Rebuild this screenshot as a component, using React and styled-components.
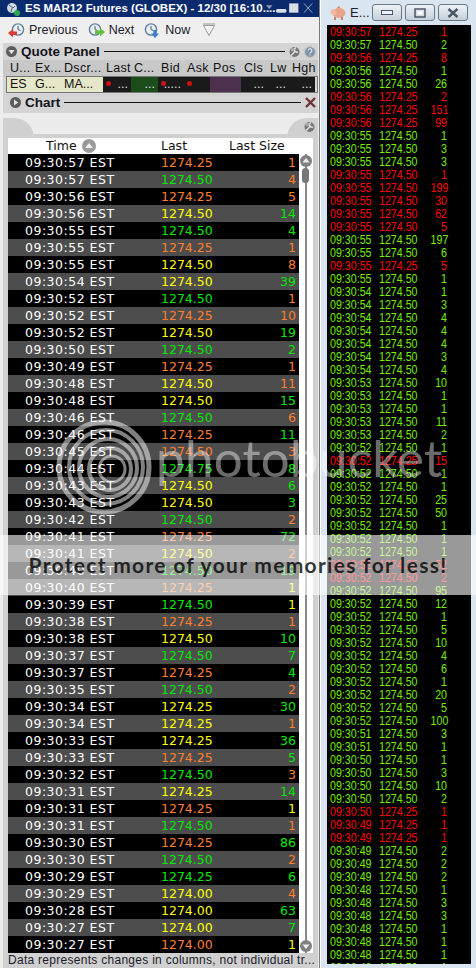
import React from "react";
import styled, { createGlobalStyle } from "styled-components";

const Global = createGlobalStyle`
  html, body { margin: 0; padding: 0; background: #d9e6f2; }
`;

const TAPE = [
  ["57","25","1","o","o"],["57","50","4","g","o"],["56","25","5","o","o"],["56","50","14","y","g"],
  ["55","50","4","g","g"],["55","25","1","o","o"],["55","50","8","y","o"],["54","50","39","y","g"],
  ["52","50","1","g","o"],["52","25","10","o","o"],["52","50","19","y","g"],["50","50","2","g","g"],
  ["49","25","1","o","o"],["48","50","11","y","o"],["48","50","15","y","g"],["46","50","6","g","o"],
  ["46","25","11","o","g"],["45","50","3","o","o"],["44","75","8","g","g"],["43","50","6","y","g"],
  ["43","50","3","y","g"],["42","50","2","g","o"],["41","25","72","o","g"],["41","50","2","y","o"],
  ["40","50","19","g","g"],["40","25","1","o","y"],["39","50","1","g","y"],["38","25","1","o","o"],
  ["38","50","10","y","g"],["37","50","7","g","g"],["37","25","4","o","g"],["35","50","2","g","o"],
  ["34","25","30","y","g"],["34","25","1","y","o"],["33","25","36","y","g"],["33","25","5","o","g"],
  ["32","50","3","g","o"],["31","25","14","y","g"],["31","25","1","o","y"],["31","50","1","g","o"],
  ["30","25","86","o","g"],["30","50","2","g","o"],["29","25","6","g","g"],
];
const TAPE_END = [
  ["29","4","y","o"],["28","63","y","g"],["27","7","y","g"],["27","1","o","y"],
];

const TICKS = [
  ["57","25","1","r"],["57","50","2","g"],["56","25","8","r"],["56","50","1","g"],["56","50","26","g"],
  ["56","25","2","r"],["56","25","151","r"],["56","25","99","r"],["55","50","1","g"],["55","50","3","g"],
  ["55","50","3","g"],["55","50","1","r"],["55","50","199","r"],["55","50","30","r"],["55","50","62","r"],
  ["55","50","5","r"],["55","50","197","g"],["55","50","6","g"],["55","25","5","r"],["55","50","1","g"],
  ["54","50","1","g"],["54","50","3","g"],["54","50","4","g"],["54","50","4","g"],["54","50","4","g"],
  ["54","50","3","g"],["54","50","4","g"],["53","50","10","g"],["53","50","1","g"],["53","50","1","g"],
  ["53","50","11","g"],["53","50","2","g"],["52","50","1","g"],["52","25","15","r"],["52","50","1","g"],
  ["52","50","1","g"],["52","50","25","g"],["52","50","50","g"],["52","50","1","g"],["52","50","1","g"],
  ["52","50","1","g"],["52","25","52","r"],["52","50","2","r"],["52","50","95","g"],["52","50","12","g"],
  ["52","50","1","g"],["52","50","5","g"],["52","50","10","g"],["52","50","4","g"],["52","50","6","g"],
  ["52","50","1","g"],["52","50","20","g"],["52","50","5","g"],["52","50","100","g"],["51","50","3","g"],
  ["51","50","1","g"],["50","50","1","g"],["50","50","3","g"],["50","50","10","g"],["50","50","2","g"],
  ["50","25","1","r"],["49","25","1","r"],["49","25","1","r"],["49","50","2","g"],["49","50","2","g"],
  ["49","50","2","g"],["48","50","1","g"],["48","50","3","g"],["48","50","3","g"],["48","50","1","g"],
  ["48","50","1","g"],["48","50","1","g"],["48","50","1","g"],
];

const tone = { o: "#ff7f2a", g: "#00e800", y: "#ffff00", r: "#ff0000", l: "#77ee00" };

const COLUMNS = "25px 29px 42px 28px 27px 26px 26px 31px 26px 22px 26px";
const QUOTE_HEADS = ["U...", "Ex...", "Dscr...", "Last", "C...", "Bid", "Ask", "Pos", "Cls", "Lw", "Hgh"];
const QUOTE_CELLS = [
  { t: "ES", k: "cream" }, { t: "G...", k: "cream" }, { t: "MA...", k: "cream" },
  { t: "...", k: "dark", dot: true }, { t: "...", k: "green" }, { t: ".....", k: "dark", dot: true },
  { t: "", k: "dark", dot: true }, { t: "", k: "purple" }, { t: "...", k: "dark" },
  { t: "...", k: "dark" }, { t: "...", k: "dark" },
];
const cellBg = { cream: "#e6e6c8", dark: "#1a1a1a", green: "#1b4d1b", purple: "#4d304d" };

const Page = styled.div`
  position: relative;
  width: 476px;
  height: 968px;
  overflow: hidden;
  display: flex;
  background: #d9e6f2;
`;
const MainWindow = styled.div`
  width: 319px;
  height: 968px;
  flex: none;
  display: flex;
  flex-direction: column;
  background: #ececec;
  border-right: 1px solid #7a7a7a;
  font-family: "DejaVu Sans", sans-serif;
`;
const TitleBar = styled.div`
  height: 17px;
  flex: none;
  display: flex;
  align-items: center;
  gap: 3px;
  padding: 0 3px 0 6px;
  background: #0a2a6e;
  color: #fff;
  font: bold 11.5px/17px "Liberation Sans", sans-serif;
`;
const TitleText = styled.span`
  flex: 1;
  min-width: 0;
  padding-left: 2px;
  white-space: nowrap;
`;
const Toolbar = styled.div`
  height: 26px;
  flex: none;
  display: flex;
  align-items: center;
  padding-left: 8px;
  background: #efefef;
  color: #1c1c2c;
  font: 12.5px "Liberation Sans", sans-serif;
`;
const ToolItem = styled.span`
  display: flex;
  align-items: center;
  gap: 4px;
  margin-right: ${(p) => p.$gap}px;
`;
const Panel = styled.div`
  margin: 0 1px 0 3px;
  background: #d4d4d4;
  flex: none;
`;
const PanelHead = styled.div`
  height: ${(p) => p.$h}px;
  display: flex;
  align-items: center;
  gap: 4px;
  padding: 0 2px 0 ${(p) => p.$pad}px;
  font: bold 13.5px "Liberation Sans", sans-serif;
  color: #141420;
`;
const Rule = styled.span`
  flex: 1;
  height: 1px;
  background: #111;
`;
const QuoteHeads = styled.div`
  display: grid;
  grid-template-columns: ${COLUMNS};
  height: 17px;
  padding-left: 4px;
  background: #c8c8c8;
  font: 12.5px/17px "Liberation Sans", sans-serif;
  color: #111;
  letter-spacing: 0.3px;
`;
const HeadCell = styled.span`
  padding-left: 3px;
  white-space: nowrap;
`;
const QuoteRow = styled.div`
  display: grid;
  grid-template-columns: ${COLUMNS};
  height: 15px;
  margin: 0 1px 0 4px;
  outline: 1px solid #777;
`;
const QuoteCell = styled.span`
  display: flex;
  align-items: center;
  justify-content: ${(p) => (p.$k === "cream" ? "flex-start" : "flex-end")};
  padding: 0 ${(p) => (p.$k === "cream" ? 0 : 3)}px 0 3px;
  background: ${(p) => cellBg[p.$k]};
  color: ${(p) => (p.$k === "cream" ? "#111" : "#ddd")};
  font: 12.5px/15px "Liberation Sans", sans-serif;
  position: relative;
`;
const Dot = styled.i`
  position: absolute;
  left: 3px;
  top: 4px;
  width: 5px;
  height: 5px;
  border-radius: 50%;
  background: #cc1111;
`;
const Gap = styled.div`
  height: 5px;
  flex: none;
  background: #ececec;
`;
const TablePanel = styled.div`
  margin: 0 1px 0 3px;
  flex: 1;
  min-height: 0;
  display: flex;
  flex-direction: column;
  background: #d0d0d0;
`;
const TabStrip = styled.div`
  height: 20px;
  flex: none;
  display: flex;
  background: #ececec;
`;
const TabEar = styled.div`
  width: 31px;
  flex: none;
  display: flex;
  justify-content: flex-end;
  padding: 3px 3px 0 0;
  box-sizing: border-box;
  background: #d0d0d0;
  border-radius: ${(p) => (p.$side === "l" ? "0 22px 0 0" : "22px 0 0 0")};
`;
const TabMiddle = styled.div`
  flex: 1;
  background: linear-gradient(#ececec 16px, #d0d0d0 16px);
`;
const TableWrap = styled.div`
  flex: 1;
  min-height: 0;
  margin: 0 5px;
  background: #fff;
  display: flex;
  flex-direction: column;
`;
const TableHead = styled.div`
  height: 16px;
  flex: none;
  display: grid;
  grid-template-columns: 153px 68px 1fr;
  font: 12.5px/16px "DejaVu Sans", sans-serif;
  color: #111;
`;
const HeadLabel = styled.span`
  display: flex;
  align-items: center;
  gap: 5px;
  padding-left: ${(p) => p.$pad}px;
`;
const TableBody = styled.div`
  flex: 1;
  min-height: 0;
  display: flex;
`;
const Rows = styled.div`
  width: 291px;
  flex: none;
`;
const Row = styled.div`
  height: 17px;
  display: grid;
  grid-template-columns: 153px 70px 1fr;
  background: ${(p) => (p.$alt ? "#4d4d4d" : "#000")};
  font: 12.5px/17px "DejaVu Sans", sans-serif;
  white-space: nowrap;
`;
const TimeCell = styled.span`
  padding-left: 17px;
  color: #fff;
  letter-spacing: 0.5px;
`;
const LastCell = styled.span`
  color: ${(p) => tone[p.$c]};
`;
const SizeCell = styled.span`
  text-align: right;
  padding-right: 3px;
  color: ${(p) => tone[p.$c]};
`;
const Scroll = styled.div`
  flex: 1;
  position: relative;
  background: linear-gradient(90deg, #fff 6px, #8a8a8a 6px, #8a8a8a 8px, #fff 8px);
`;
const ScrollBtn = styled.div`
  position: absolute;
  left: 1px;
  height: 12px;
  ${(p) => (p.$end ? "bottom: 1px;" : "top: 1px;")}
`;
const Thumb = styled.div`
  position: absolute;
  left: 3px;
  top: 14px;
  width: 7px;
  height: 15px;
  border-radius: 4px;
  background: #777;
`;
const Footer = styled.div`
  height: 15px;
  flex: none;
  padding-left: 5px;
  font: 12px/15px "Liberation Sans", sans-serif;
  color: #1a1a2a;
  letter-spacing: 0.28px;
  white-space: nowrap;
  overflow: hidden;
`;
const SideWindow = styled.div`
  flex: 1;
  display: flex;
  flex-direction: column;
  background: #d9e6f2;
  border-left: 1px solid #fff;
`;
const SideTitle = styled.div`
  height: 25px;
  flex: none;
  display: flex;
  align-items: center;
  padding-left: 9px;
  font: 13px "Liberation Sans", sans-serif;
  color: #222;
`;
const SideName = styled.span`
  margin-left: 4px;
  width: 22px;
`;
const WinButtons = styled.div`
  display: flex;
  gap: 3px;
`;
const WinButton = styled.span`
  width: 30px;
  height: 17px;
  box-sizing: border-box;
  display: flex;
  align-items: center;
  justify-content: center;
  border: 1px solid #6a7684;
  border-radius: 3px;
  background: linear-gradient(#eef2f6, #c6d0da);
`;
const Ticks = styled.div`
  height: 939px;
  margin: 0 5px 0 6px;
  background: #000;
  overflow: hidden;
  flex: none;
`;
const Tick = styled.div`
  height: 13px;
  display: grid;
  grid-template-columns: 49px 48px 20px;
  padding-left: 3px;
  color: ${(p) => tone[p.$c]};
  font: 13px/13px "Liberation Sans", sans-serif;
  white-space: nowrap;
`;
const TickText = styled.span`
  display: inline-block;
  transform: scaleX(0.82);
  transform-origin: ${(p) => (p.$end ? "right" : "left")} center;
  text-align: ${(p) => (p.$end ? "right" : "left")};
`;
const WatermarkBand = styled.div`
  position: absolute;
  left: 0;
  right: 0;
  top: 535px;
  height: 60px;
  background: rgba(255, 255, 255, 0.6);
  display: flex;
  align-items: flex-end;
  justify-content: center;
`;
const WatermarkCta = styled.span`
  margin-bottom: 18px;
  font: 700 21px/24px "Lato", sans-serif;
  letter-spacing: 1.3px;
  color: rgba(0, 0, 0, 0.78);
  white-space: nowrap;
`;
const WatermarkLogo = styled.svg`
  position: absolute;
  left: 55px;
  top: 419px;
`;
const WatermarkWord = styled.span`
  position: absolute;
  left: 156px;
  top: 430px;
  font: 400 51px/56px "Lato", sans-serif;
  letter-spacing: 0.3px;
  color: rgba(255, 255, 255, 0.42);
  white-space: nowrap;
`;

const Clock = ({ arrow, dir }) => (
  <svg width="17" height="17" viewBox="0 0 17 17">
    <circle cx={dir === "l" ? 10 : 7} cy="7.5" r="5.6" fill="#e8eef4" stroke="#5f7f9c" strokeWidth="1.4" />
    <path d={dir === "l" ? "M10 4v3.5l2.5 1" : "M7 4v3.5l2.5 1"} fill="none" stroke="#46586a" strokeWidth="1" />
    {dir === "l" && <path d="M0 11l5-4v2.5h4v3.5h-4v2.5z" fill={arrow} />}
    {dir === "r" && <path d="M17 10l-5-4v2.5H7v3.5h5v2.5z" fill={arrow} />}
    {dir === "d" && <path d="M11 16l-4-4.5h2.4V8h3.2v3.5H15z" fill={arrow} />}
  </svg>
);
const Toggle = ({ open }) => (
  <svg width="11" height="11" viewBox="0 0 11 11">
    <circle cx="5.5" cy="5.5" r="5.5" fill="#5c5c5c" />
    <path d={open ? "M2.5 4h6l-3 4.2z" : "M4 2.5v6l4.2-3z"} fill="#e4e4e4" />
  </svg>
);
const Wrench = () => (
  <svg width="11" height="12" viewBox="0 0 11 12">
    <circle cx="5.5" cy="6" r="5" fill="#777" />
    <path d="M2 9.5l4.5-4.5M7 1.5a3 3 0 0 0-1 4l3 1" fill="none" stroke="#e4e4e4" strokeWidth="1.4" />
    <circle cx="3.5" cy="3.5" r="2" fill="#aaa" />
  </svg>
);
const Help = () => (
  <svg width="12" height="12" viewBox="0 0 12 12">
    <circle cx="6" cy="6" r="5.4" fill="#7f93ab" stroke="#c4c4c4" strokeWidth="1" />
    <path d="M4.3 4.6a1.8 1.8 0 1 1 2.6 1.6c-.6.3-.9.6-.9 1.2M6 8.6v1" fill="none" stroke="#e8e8e8" strokeWidth="1.1" />
  </svg>
);
const ScrollCircle = ({ up }) => (
  <svg width="12" height="12" viewBox="0 0 12 12" style={{ display: "block" }}>
    <circle cx="6" cy="6" r="6" fill="#808080" />
    <path d={up ? "M2.4 7.6h7.2L6 3z" : "M2.4 4.4h7.2L6 9z"} fill="#ececec" />
  </svg>
);

const time = (s) => `09:30:${s}`;

export default function App() {
  const tapeRows = [
    ...TAPE.map(([s, f, q, lc, sc]) => ({ s, price: `1274.${f}`, q, lc, sc })),
    ...TAPE_END.map(([s, q, lc, sc]) => ({ s, price: "1274.00", q, lc, sc })),
  ];
  return (
    <Page>
      <Global />
      <MainWindow>
        <TitleBar>
          <svg width="14" height="14" viewBox="0 0 14 14">
            <circle cx="6" cy="6" r="5" fill="#cfd8e4" />
            <path d="M3 3l4 3 2-2M5 10l1-4" stroke="#47607f" strokeWidth="1" fill="none" />
            <circle cx="11" cy="11" r="3" fill="#2aa84a" />
          </svg>
          <TitleText>ES MAR12 Futures (GLOBEX) - 12/30 [16:10.....</TitleText>
          <svg width="50" height="13" viewBox="0 0 54 13">
            <path d="M0 3h7l-3.5 4z" fill="#8f9db8" />
            <rect x="11" y="7" width="11" height="4" rx="1.5" fill="#d8dde6" />
            <rect x="25" y="1" width="10" height="10" fill="#d8dde6" />
            <path d="M41 1l9 10M50 1l-9 10" stroke="#9fb0c8" strokeWidth="1" />
          </svg>
        </TitleBar>
        <Toolbar>
          <ToolItem $gap={10}><Clock dir="l" arrow="#d93a3a" />Previous</ToolItem>
          <ToolItem $gap={10}><Clock dir="r" arrow="#62c23c" />Next</ToolItem>
          <ToolItem $gap={12}><Clock dir="d" arrow="#3a7fd0" />Now</ToolItem>
          <svg width="14" height="14" viewBox="0 0 14 14">
            <path d="M1.5 2.5h11L7 12.5z" fill="#f4f4f4" stroke="#9a9a9a" strokeWidth="1" />
            <path d="M1 1h12" stroke="#9a9a9a" />
          </svg>
        </Toolbar>
        <Panel>
          <PanelHead $h={17} $pad={3}>
            <Toggle open />
            Quote Panel
            <Rule />
            <Wrench />
            <Help />
          </PanelHead>
          <QuoteHeads>
            {QUOTE_HEADS.map((h) => <HeadCell key={h}>{h}</HeadCell>)}
          </QuoteHeads>
          <QuoteRow>
            {QUOTE_CELLS.map((c, i) => (
              <QuoteCell key={i} $k={c.k}>
                {c.dot && <Dot />}
                {c.t}
              </QuoteCell>
            ))}
          </QuoteRow>
          <PanelHead $h={21} $pad={7}>
            <Toggle />
            Chart
            <Rule />
            <svg width="11" height="11" viewBox="0 0 11 11">
              <path d="M1 1l9 9M10 1l-9 9" stroke="#6e3434" strokeWidth="2.4" />
            </svg>
          </PanelHead>
        </Panel>
        <Gap />
        <TablePanel>
          <TabStrip>
            <TabEar $side="l" />
            <TabMiddle />
            <TabEar $side="r"><Wrench /></TabEar>
          </TabStrip>
          <TableWrap>
            <TableHead>
              <HeadLabel $pad={38}>
                Time
                <svg width="14" height="14" viewBox="0 0 14 14">
                  <circle cx="7" cy="7" r="7" fill="#9a9a9a" />
                  <path d="M3 9h8L7 4z" fill="#eee" />
                </svg>
              </HeadLabel>
              <HeadLabel $pad={0}>Last</HeadLabel>
              <HeadLabel $pad={0}>Last Size</HeadLabel>
            </TableHead>
            <TableBody>
              <Rows>
                {tapeRows.map((r, i) => (
                  <Row key={i} $alt={i % 2 === 1}>
                    <TimeCell>{time(r.s)} EST</TimeCell>
                    <LastCell $c={r.lc}>{r.price}</LastCell>
                    <SizeCell $c={r.sc}>{r.q}</SizeCell>
                  </Row>
                ))}
              </Rows>
              <Scroll>
                <ScrollBtn><ScrollCircle up /></ScrollBtn>
                <Thumb />
                <ScrollBtn $end><ScrollCircle /></ScrollBtn>
              </Scroll>
            </TableBody>
          </TableWrap>
          <Footer>Data represents changes in columns, not individual tr...</Footer>
        </TablePanel>
      </MainWindow>
      <SideWindow>
        <SideTitle>
          <svg width="16" height="14" viewBox="0 0 16 14">
            <ellipse cx="9" cy="7" rx="6.5" ry="5" fill="#e9a58c" />
            <circle cx="3.5" cy="6" r="3" fill="#f0b8a0" />
            <path d="M5 11v3M12 11v3" stroke="#c77f66" strokeWidth="2" />
            <path d="M7 2l2-2 1 2" fill="#c77f66" />
          </svg>
          <SideName>E...</SideName>
          <WinButtons>
            <WinButton>
              <svg width="12" height="6" viewBox="0 0 12 6">
                <rect x="0.5" y="0.5" width="11" height="4" fill="#eef" stroke="#4a5866" />
              </svg>
            </WinButton>
            <WinButton>
              <svg width="12" height="10" viewBox="0 0 12 10">
                <rect x="1" y="1" width="10" height="8" fill="none" stroke="#4a5866" strokeWidth="1.5" />
                <rect x="3.5" y="3.5" width="5" height="3" fill="#fff" />
              </svg>
            </WinButton>
            <WinButton>
              <svg width="12" height="10" viewBox="0 0 12 10">
                <path d="M1.5 1l9 8M10.5 1l-9 8" stroke="#4a5866" strokeWidth="2.4" />
              </svg>
            </WinButton>
          </WinButtons>
        </SideTitle>
        <Ticks>
          {TICKS.map(([s, f, q, c], i) => (
            <Tick key={i} $c={c === "g" ? "l" : "r"}>
              <TickText>{time(s)}</TickText>
              <TickText>1274.{f}</TickText>
              <TickText $end>{q}</TickText>
            </Tick>
          ))}
        </Ticks>
      </SideWindow>
      <WatermarkLogo width="100" height="96" viewBox="0 0 100 96">
        <g fill="none" stroke="rgba(255,255,255,0.5)">
          <circle cx="49" cy="48" r="45" strokeWidth="5" />
          <circle cx="51" cy="48" r="37" strokeWidth="4" />
          <circle cx="53" cy="49" r="29" strokeWidth="4" />
          <circle cx="55" cy="50" r="21" strokeWidth="4" />
          <circle cx="57" cy="50" r="13" strokeWidth="3" />
        </g>
      </WatermarkLogo>
      <WatermarkWord>photobucket</WatermarkWord>
      <WatermarkBand>
        <WatermarkCta>Protect more of your memories for less!</WatermarkCta>
      </WatermarkBand>
    </Page>
  );
}
